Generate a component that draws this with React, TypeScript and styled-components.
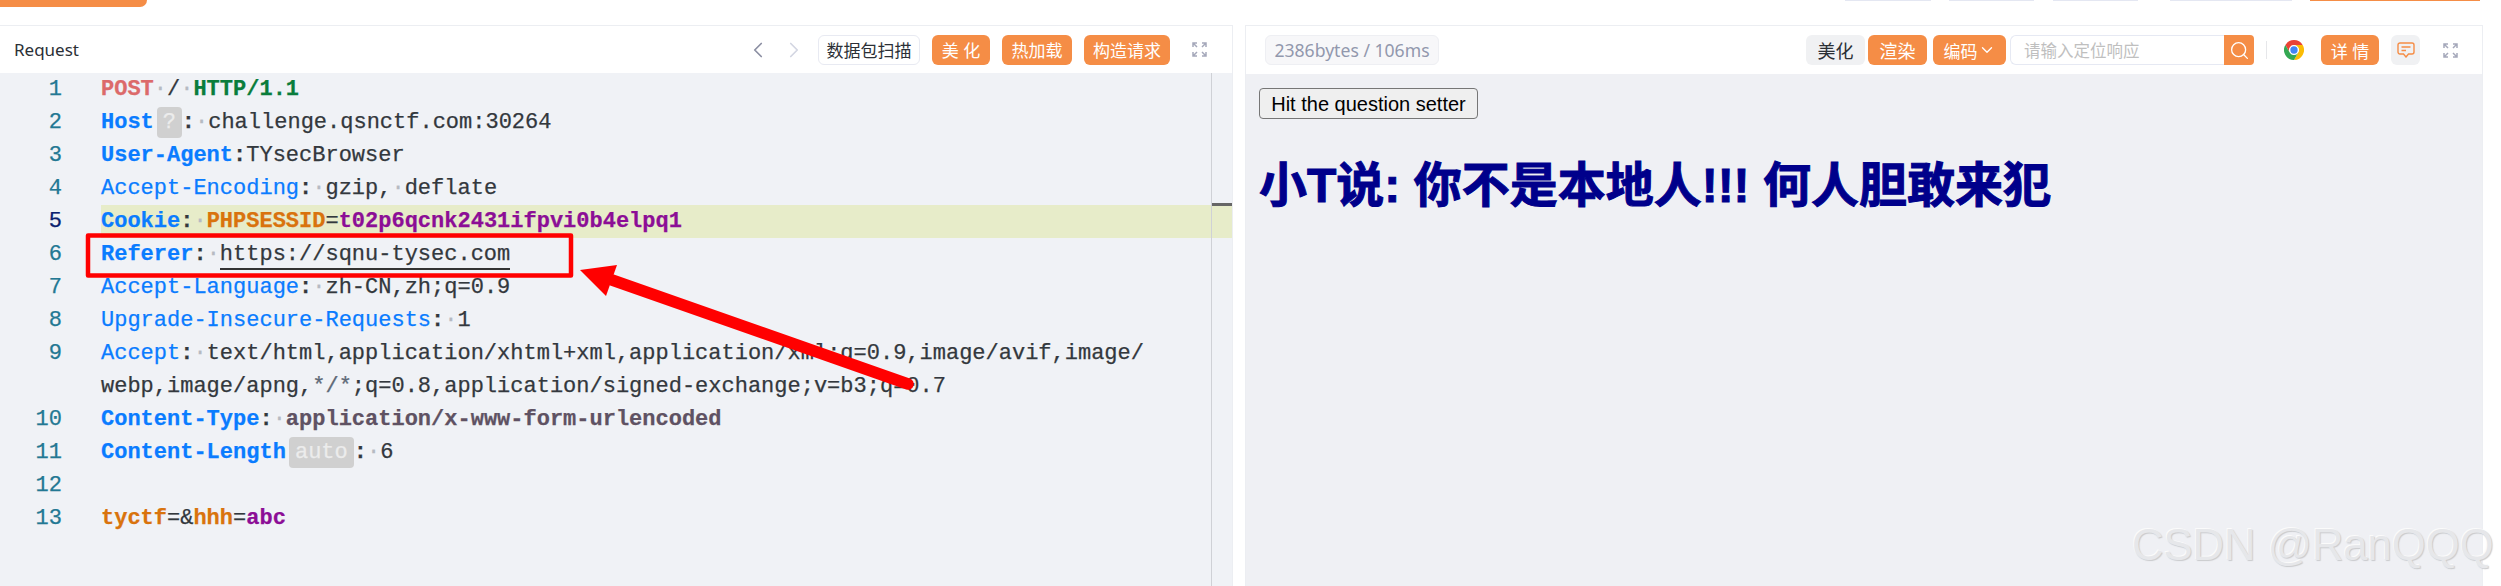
import React from "react";
import styled, { createGlobalStyle } from "styled-components";
import { ChevronDown, ChevronLeft, ChevronRight, Search } from "lucide-react";

const ORANGE = "#f58d46";
const CJK = `"Noto Sans", "Noto Sans CJK SC", sans-serif`;
const MONO = `"Liberation Mono", "DejaVu Sans Mono", monospace`;

const Global = createGlobalStyle`
  html, body { margin: 0; padding: 0; background: #fff; }
  body { width: 2501px; height: 586px; overflow: hidden; font-family: ${CJK}; }
  * { box-sizing: border-box; }
`;

const Page = styled.div`
  position: relative;
  width: 2501px;
  height: 586px;
  overflow: hidden;
  display: flex;
  flex-direction: column;
`;

const TopBar = styled.div`
  height: 25px;
  flex: none;
  display: flex;
  justify-content: space-between;
  align-items: flex-start;
  padding-right: 21px;
`;

const TopPrimary = styled.div`
  width: 147px;
  height: 7px;
  background: ${ORANGE};
  border-radius: 0 0 7px 0;
`;

const TopStubs = styled.div`
  display: flex;
`;

const TopStub = styled.div<{ $w: number; $ml: number; $on?: boolean }>`
  width: ${(p) => p.$w}px;
  margin-left: ${(p) => p.$ml}px;
  height: 1px;
  background: ${(p) => (p.$on ? ORANGE : "#e4e7f2")};
`;

const Panels = styled.div`
  flex: 1;
  display: flex;
  gap: 12px;
  min-height: 0;
`;

const Panel = styled.section<{ $w: number; $left?: boolean }>`
  width: ${(p) => p.$w}px;
  display: flex;
  flex-direction: column;
  border-top: 1px solid #eceef2;
  border-right: 1px solid #eceef2;
  border-left: ${(p) => (p.$left ? "0" : "1px solid #eceef2")};
`;

const Header = styled.header<{ $h: number }>`
  height: ${(p) => p.$h}px;
  flex: none;
  display: flex;
  align-items: center;
`;

const Title = styled.div`
  font-size: 17px;
  color: #2b2f36;
  margin-left: 14px;
  margin-right: auto;
`;

const Chevron = styled.span<{ $ml?: number; $c: string }>`
  display: flex;
  margin-left: ${(p) => p.$ml ?? 0}px;
  color: ${(p) => p.$c};
`;

const Btn = styled.div<{ $w: number; $ml: number; $kind: "orange" | "gray" | "line"; $fs?: number }>`
  width: ${(p) => p.$w}px;
  height: 30px;
  margin-left: ${(p) => p.$ml}px;
  display: flex;
  align-items: center;
  justify-content: center;
  flex: none;
  border-radius: 6px;
  white-space: pre;
  font-size: ${(p) => p.$fs ?? 17}px;
  color: ${(p) => (p.$kind === "orange" ? "#fff" : "#2b2f36")};
  background: ${(p) => (p.$kind === "orange" ? ORANGE : p.$kind === "gray" ? "#f0f1f3" : "#fff")};
  border: ${(p) => (p.$kind === "line" ? "1px solid #e8eaf2" : "0")};
`;

const IconSlot = styled.span<{ $ml: number; $mr?: number }>`
  display: flex;
  flex: none;
  margin-left: ${(p) => p.$ml}px;
  margin-right: ${(p) => p.$mr ?? 0}px;
`;

const Editor = styled.div`
  position: relative;
  flex: 1;
  background: #f0f2f6;
`;

const Row = styled.div`
  display: flex;
  height: 33px;
  font-family: ${MONO};
  font-size: 22px;
  line-height: 33px;
  white-space: pre;
  color: #33383d;
  -webkit-text-stroke: 0.25px currentColor;
`;

const LineNo = styled.div<{ $active?: boolean }>`
  width: 62px;
  flex: none;
  text-align: right;
  color: ${(p) => (p.$active ? "#0b216f" : "#237893")};
`;

const Code = styled.div<{ $active?: boolean }>`
  flex: 1;
  margin-left: 39px;
  background: ${(p) => (p.$active ? "#e7ecc9" : "transparent")};
`;

const Tok = styled.span<{ $c?: string; $b?: boolean }>`
  color: ${(p) => p.$c ?? "inherit"};
  font-weight: ${(p) => (p.$b ? 700 : 400)};
`;

const Dot = styled.span`
  color: #b6bac2;
`;

const Hint = styled.span<{ $w: number }>`
  display: inline-block;
  width: ${(p) => p.$w}px;
  height: 31px;
  margin-left: 3px;
  line-height: 31px;
  vertical-align: top;
  margin-top: 1px;
  text-align: center;
  border-radius: 4px;
  background: #d0d0d0;
  color: #ececec;
`;

const Url = styled.span`
  display: inline-block;
  height: 32px;
  border-bottom: 2px solid #333;
  vertical-align: top;
`;

const Ruler = styled.div`
  position: absolute;
  top: 0;
  bottom: 0;
  right: 0;
  width: 21px;
  border-left: 1px solid #cfd1d6;
`;

const RulerMark = styled.div`
  position: absolute;
  top: 130px;
  left: 0;
  right: 0;
  height: 3px;
  background: #666;
`;

const Size = styled.div`
  width: 174px;
  height: 30px;
  margin-left: 19px;
  margin-right: auto;
  display: flex;
  align-items: center;
  justify-content: center;
  font-size: 17.6px;
  color: #9298ad;
  background: #f7f7f9;
  border: 1px solid #eeeff3;
  border-radius: 6px;
`;

const SearchBox = styled.div`
  width: 244px;
  height: 30px;
  margin-left: 4px;
  display: flex;
  flex: none;
`;

const SearchInput = styled.div`
  flex: 1;
  display: flex;
  align-items: center;
  padding-left: 13px;
  font-size: 16.5px;
  color: #bfbfbf;
  border: 1px solid #e6e9f3;
  border-right: 0;
  border-radius: 6px 0 0 6px;
`;

const SearchBtn = styled.div`
  width: 30px;
  display: flex;
  align-items: center;
  justify-content: center;
  color: #fff;
  background: ${ORANGE};
  border-radius: 0 4px 4px 0;
`;

const Divider = styled.div`
  width: 1px;
  height: 18px;
  margin-left: 12px;
  background: #e6e7ea;
`;

const Preview = styled.div`
  flex: 1;
  padding: 14px 13px;
  background: #eff0f4;
`;

const HitButton = styled.button`
  display: block;
  width: 219px;
  height: 31px;
  padding: 0;
  font-family: "Liberation Sans", Arial, sans-serif;
  font-size: 20px;
  line-height: 1;
  color: #000;
  background: #efefef;
  border: 1px solid #767676;
  border-radius: 4px;
`;

const Heading = styled.h1`
  margin: 32px 0 0;
  font-family: "Liberation Sans", "Noto Sans CJK SC", sans-serif;
  font-size: 48px;
  font-weight: 700;
  line-height: 70px;
  color: #00008b;
  white-space: pre;
  -webkit-text-stroke: 1px #00008b;
`;

const Annotations = styled.svg`
  position: absolute;
  left: 0;
  top: 0;
  pointer-events: none;
`;

const Watermark = styled.div`
  position: absolute;
  left: 2132px;
  top: 515px;
  font-family: "Liberation Sans", Arial, sans-serif;
  font-size: 43.6px;
  line-height: 60px;
  white-space: pre;
  color: #e6e7ea;
  text-shadow: 1px 1px 1px #c9cacd, -1px -1px 0 #fbfbfb;
`;

const Expand = () => (
  <svg width="15" height="15" viewBox="0 0 15 15" fill="none" stroke="#a5a8ba" strokeWidth="1.5">
    <path d="M1 5V1h4M1 1l4 4M14 5V1h-4M14 1l-4 4M1 10v4h4M1 14l4-4M14 10v4h-4M14 14l-4-4" />
  </svg>
);

const Chrome = () => (
  <svg width="20" height="20" viewBox="0 0 24 24">
    <g>
      {[
        ["#ea4335", 0],
        ["#fbbc05", 120],
        ["#34a853", 240],
      ].map(([c, r]) => (
        <path
          key={String(r)}
          fill={String(c)}
          transform={`rotate(${r} 12 12)`}
          d="M12 0A12 12 0 0 1 22.4 6H12A6 6 0 0 0 6.8 15L1.6 6A12 12 0 0 1 12 0Z"
        />
      ))}
    </g>
    <circle cx="12" cy="12" r="5.6" fill="#fff" />
    <circle cx="12" cy="12" r="4.4" fill="#4285f4" />
  </svg>
);

const Comment = () => (
  <svg width="18" height="16" viewBox="0 0 18 16" fill="none" stroke={ORANGE} strokeWidth="1.4">
    <path d="M3 1h12a2 2 0 0 1 2 2v7a2 2 0 0 1-2 2h-3.5L9 15l-2.5-3H3a2 2 0 0 1-2-2V3a2 2 0 0 1 2-2Z" />
    <path d="M4.5 5h9M4.5 8.5h4.5" />
  </svg>
);

const BLUE = "#0a7cff";
const d = <Dot>·</Dot>;
const Key = ({ b, children }: { b?: boolean; children: React.ReactNode }) => (
  <Tok $c={BLUE} $b={b}>
    {children}
  </Tok>
);

const lines: { n?: number; active?: boolean; body: React.ReactNode }[] = [
  {
    n: 1,
    body: (
      <>
        <Tok $c="#dc6a6a" $b>POST</Tok>{d}/{d}<Tok $c="#0a7d3c" $b>HTTP/1.1</Tok>
      </>
    ),
  },
  {
    n: 2,
    body: (
      <>
        <Key b>Host</Key><Hint $w={25}>?</Hint><Tok $b>:</Tok>{d}challenge.qsnctf.com:30264
      </>
    ),
  },
  { n: 3, body: (<><Key b>User-Agent</Key><Tok $b>:</Tok>TYsecBrowser</>) },
  { n: 4, body: (<><Key>Accept-Encoding</Key><Tok $b>:</Tok>{d}gzip,{d}deflate</>) },
  {
    n: 5,
    active: true,
    body: (
      <>
        <Key b>Cookie</Key><Tok $b>:</Tok>{d}<Tok $c="#d9730d" $b>PHPSESSID</Tok>=<Tok $c="#8c0e96" $b>t02p6qcnk2431ifpvi0b4elpq1</Tok>
      </>
    ),
  },
  { n: 6, body: (<><Key b>Referer</Key><Tok $b>:</Tok>{d}<Url>https://sqnu-tysec.com</Url></>) },
  { n: 7, body: (<><Key>Accept-Language</Key><Tok $b>:</Tok>{d}zh-CN,zh;q=0.9</>) },
  { n: 8, body: (<><Key>Upgrade-Insecure-Requests</Key><Tok $b>:</Tok>{d}1</>) },
  { n: 9, body: (<><Key>Accept</Key><Tok $b>:</Tok>{d}text/html,application/xhtml+xml,application/xml;q=0.9,image/avif,image/</>) },
  { body: <>webp,image/apng,<Tok $c="#5f6a78">*/*</Tok>;q=0.8,application/signed-exchange;v=b3;q=0.7</> },
  { n: 10, body: (<><Key b>Content-Type</Key><Tok $b>:</Tok>{d}<Tok $c="#5f5263" $b>application/x-www-form-urlencoded</Tok></>) },
  { n: 11, body: (<><Key b>Content-Length</Key><Hint $w={65}>auto</Hint><Tok $b>:</Tok>{d}6</>) },
  { n: 12, body: null },
  {
    n: 13,
    body: (
      <>
        <Tok $c="#d9730d" $b>tyctf</Tok>=&amp;<Tok $c="#d9730d" $b>hhh</Tok>=<Tok $c="#8c0e96" $b>abc</Tok>
      </>
    ),
  },
];

export default function App() {
  return (
    <Page>
      <Global />
      <TopBar>
        <TopPrimary />
        <TopStubs>
          <TopStub $w={86} $ml={0} />
          <TopStub $w={85} $ml={18} />
          <TopStub $w={85} $ml={19} />
          <TopStub $w={122} $ml={32} />
          <TopStub $w={170} $ml={18} $on />
        </TopStubs>
      </TopBar>
      <Panels>
        <Panel $w={1233} $left>
          <Header $h={47}>
            <Title>Request</Title>
            <Chevron $c="#8c8fa3"><ChevronLeft size={26} strokeWidth={1.6} /></Chevron>
            <Chevron $ml={10} $c="#d3d6e2"><ChevronRight size={26} strokeWidth={1.6} /></Chevron>
            <Btn $w={102} $ml={11} $kind="line">数据包扫描</Btn>
            <Btn $w={58} $ml={12} $kind="orange">美 化</Btn>
            <Btn $w={70} $ml={12} $kind="orange">热加载</Btn>
            <Btn $w={86} $ml={12} $kind="orange">构造请求</Btn>
            <IconSlot $ml={22} $mr={25}><Expand /></IconSlot>
          </Header>
          <Editor>
            {lines.map((l, i) => (
              <Row key={i}>
                <LineNo $active={l.active}>{l.n}</LineNo>
                <Code $active={l.active}>{l.body}</Code>
              </Row>
            ))}
            <Ruler><RulerMark /></Ruler>
          </Editor>
        </Panel>
        <Panel $w={1238}>
          <Header $h={48}>
            <Size>2386bytes / 106ms</Size>
            <Btn $w={59} $ml={0} $kind="gray" $fs={18}>美化</Btn>
            <Btn $w={59} $ml={3} $kind="orange" $fs={18}>渲染</Btn>
            <Btn $w={73} $ml={6} $kind="orange">编码<ChevronDown size={18} strokeWidth={1.8} /></Btn>
            <SearchBox>
              <SearchInput>请输入定位响应</SearchInput>
              <SearchBtn><Search size={21} strokeWidth={1.5} /></SearchBtn>
            </SearchBox>
            <Divider />
            <IconSlot $ml={17}><Chrome /></IconSlot>
            <Btn $w={58} $ml={17} $kind="orange">详 情</Btn>
            <Btn $w={29} $ml={12} $kind="gray"><Comment /></Btn>
            <IconSlot $ml={23} $mr={24}><Expand /></IconSlot>
          </Header>
          <Preview>
            <HitButton>Hit the question setter</HitButton>
            <Heading>小T说: 你不是本地人!!! 何人胆敢来犯</Heading>
          </Preview>
        </Panel>
      </Panels>
      <Annotations width="2501" height="586" viewBox="0 0 2501 586">
        <rect x="88" y="235.5" width="483" height="40" fill="none" stroke="#ff0000" strokeWidth="4.5" strokeLinejoin="round" />
        <line x1="612" y1="280" x2="908" y2="384" stroke="#ff0000" strokeWidth="11.5" strokeLinecap="round" />
        <polygon points="580,270 617,265 606,296" fill="#ff0000" />
      </Annotations>
      <Watermark>CSDN @RanQQQ</Watermark>
    </Page>
  );
}
